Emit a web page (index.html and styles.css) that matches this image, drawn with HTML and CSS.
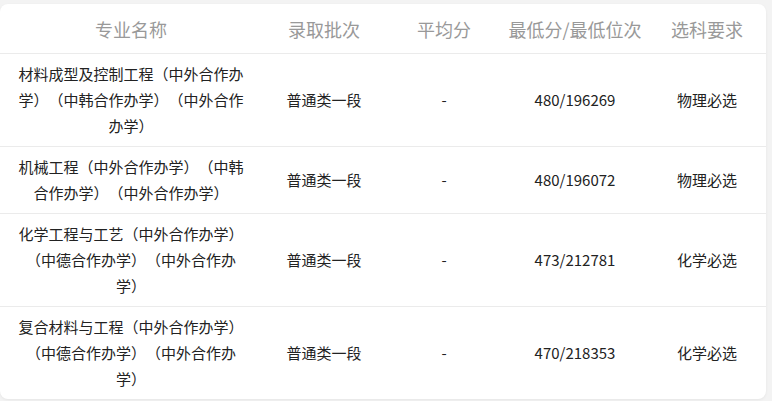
FILE: index.html
```html
<!DOCTYPE html>
<html lang="zh">
<head>
<meta charset="utf-8">
<link rel="stylesheet" href="styles.css">
</head>
<body>
<div class="card">
  <table class="score-table">
    <colgroup>
      <col class="c-name">
      <col class="c-batch">
      <col class="c-avg">
      <col class="c-min">
      <col class="c-req">
    </colgroup>
    <thead>
      <tr>
        <th>专业名称</th>
        <th>录取批次</th>
        <th>平均分</th>
        <th>最低分/最低位次</th>
        <th>选科要求</th>
      </tr>
    </thead>
    <tbody>
      <tr>
        <td>材料成型及控制工程（中外合作办学）（中韩合作办学）（中外合作办学）</td>
        <td>普通类一段</td>
        <td>-</td>
        <td>480/196269</td>
        <td>物理必选</td>
      </tr>
      <tr>
        <td>机械工程（中外合作办学）（中韩合作办学）（中外合作办学）</td>
        <td>普通类一段</td>
        <td>-</td>
        <td>480/196072</td>
        <td>物理必选</td>
      </tr>
      <tr>
        <td>化学工程与工艺（中外合作办学）（中德合作办学）（中外合作办学）</td>
        <td>普通类一段</td>
        <td>-</td>
        <td>473/212781</td>
        <td>化学必选</td>
      </tr>
      <tr>
        <td>复合材料与工程（中外合作办学）（中德合作办学）（中外合作办学）</td>
        <td>普通类一段</td>
        <td>-</td>
        <td>470/218353</td>
        <td>化学必选</td>
      </tr>
    </tbody>
  </table>
</div>
</body>
</html>
```

FILE: styles.css
```css
html, body {
  margin: 0;
  padding: 0;
}
body {
  background: #f3f3f3;
  padding: 4px 6px 2px 0;
  font-family: "Noto Sans CJK SC", "Noto Sans", sans-serif;
  text-spacing-trim: space-all;
  font-feature-settings: "chws" 0, "halt" 0, "palt" 0;
}
.card {
  background: #fff;
  border-radius: 8px;
  width: 766px;
  overflow: hidden;
  box-shadow: 0 1px 3px rgba(0, 0, 0, 0.06);
}
.score-table {
  width: 100%;
  border-collapse: collapse;
  table-layout: fixed;
}
.c-name { width: 262px; }
.c-batch { width: 124px; }
.c-avg { width: 116px; }
.c-min { width: 146px; }
.c-req { width: 118px; }

.score-table th {
  height: 49px;
  padding: 0;
  font-size: 18px;
  font-weight: normal;
  color: #999;
  text-align: center;
  border-bottom: 1px solid #ebebeb;
}
.score-table td {
  padding: 7px 16px;
  font-size: 15px;
  line-height: 26px;
  color: #222;
  text-align: center;
  border-bottom: 1px solid #ebebeb;
}
.score-table tbody tr:last-child td {
  border-bottom: none;
}
.score-table td:not(:first-child) {
  padding-left: 4px;
  padding-right: 4px;
}
```
